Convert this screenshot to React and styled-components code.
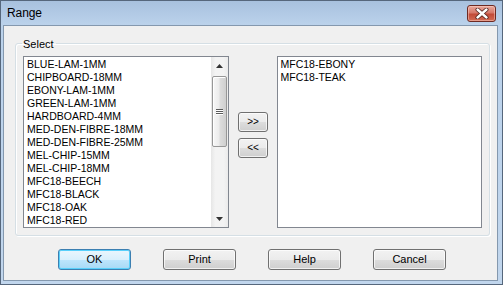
import React from 'react'
import styled, { createGlobalStyle } from 'styled-components'

const materials = [
  'BLUE-LAM-1MM',
  'CHIPBOARD-18MM',
  'EBONY-LAM-1MM',
  'GREEN-LAM-1MM',
  'HARDBOARD-4MM',
  'MED-DEN-FIBRE-18MM',
  'MED-DEN-FIBRE-25MM',
  'MEL-CHIP-15MM',
  'MEL-CHIP-18MM',
  'MFC18-BEECH',
  'MFC18-BLACK',
  'MFC18-OAK',
  'MFC18-RED',
]

const selected = ['MFC18-EBONY', 'MFC18-TEAK']

const GlobalStyle = createGlobalStyle`
  html, body {
    margin: 0;
    padding: 0;
    background: #fff;
  }
  body {
    font-family: "Liberation Sans", Arial, sans-serif;
    color: #000;
  }
`

const Window = styled.div`
  width: 503px;
  height: 285px;
  box-sizing: border-box;
  border: 1px solid #56677c;
  background: linear-gradient(#a8c1de, #bbd2eb 24px, #c1d6ed);
  display: flex;
  flex-direction: column;
  padding: 0 4px 3px 2px;
`

const TitleBar = styled.div`
  height: 24px;
  flex: none;
  display: flex;
  align-items: center;
  justify-content: space-between;
  padding: 0 2px 0 4px;
  .title {
    font-size: 12px;
    color: #000;
    letter-spacing: -0.1px;
  }
`

const CloseBtn = styled.div`
  width: 29px;
  height: 17px;
  box-sizing: border-box;
  border: 1px solid #6e2a22;
  border-radius: 3px;
  background: linear-gradient(#e9a99c, #d6786a 45%, #c24a38 55%, #d36b54);
  box-shadow: inset 0 0 0 1px rgba(255, 220, 210, 0.45);
  display: flex;
  align-items: center;
  justify-content: center;
  margin-top: 1px;
`

const Client = styled.div`
  flex: 1;
  border: 1px solid #8498ae;
  background: #f0f0f0;
  padding: 11px 7px 0 11px;
  display: flex;
  flex-direction: column;
`

const Group = styled.fieldset`
  margin: 0;
  padding: 6px 7px 7px 7px;
  border: 1px solid #d5dfe5;
  border-radius: 3px;
  box-shadow: inset 1px 1px 0 #fff, 1px 1px 0 #fff;
  display: flex;
  min-width: 0;
  legend {
    font-size: 11px;
    line-height: 13px;
    padding: 0 2px 0 1px;
    margin-left: -1px;
    position: relative;
    top: 1px;
  }
`

const ListBox = styled.div`
  width: 206px;
  height: 172px;
  box-sizing: border-box;
  border: 1px solid #828790;
  background: #fff;
  display: flex;
  overflow: hidden;
`

const Items = styled.div`
  flex: 1;
  padding: 1px 0 0 3px;
`

const Item = styled.div`
  font-size: 10.5px;
  line-height: 13px;
  height: 13px;
  white-space: nowrap;
`

const ScrollBar = styled.div`
  width: 17px;
  flex: none;
  display: flex;
  flex-direction: column;
  background: linear-gradient(to right, #e6e6e6, #f3f3f3 25%, #f3f3f3 75%, #ebebeb);
`

const Arrow = styled.div`
  height: 17px;
  flex: none;
  display: flex;
  align-items: center;
  justify-content: center;
`

const Track = styled.div`
  flex: 1;
  padding: 2px 1px 0 1px;
`

const Thumb = styled.div`
  height: 71px;
  box-sizing: border-box;
  border: 1px solid #979797;
  border-radius: 2px;
  background: linear-gradient(to right, #f7f7f7, #ececec 45%, #dcdcdc 55%, #cfcfcf);
  box-shadow: inset 1px 1px 0 #fff;
  display: flex;
  flex-direction: column;
  align-items: center;
  justify-content: center;
  gap: 1px;
  span {
    width: 7px;
    height: 1px;
    background: #5a5a5a;
    box-shadow: 0 1px 0 #fff;
  }
`

const Middle = styled.div`
  width: 47px;
  flex: none;
  display: flex;
  flex-direction: column;
  align-items: center;
  padding-top: 56px;
  gap: 6px;
  padding-left: 1px;
`

const Button = styled.button`
  width: ${p => (p.$small ? '30px' : '73px')};
  height: ${p => (p.$small ? '20px' : '21px')};
  box-sizing: border-box;
  margin: 0;
  padding: 0;
  border: 1px solid ${p => (p.$default ? '#3c7fb1' : '#707070')};
  border-radius: 3px;
  background: ${p =>
    p.$default
      ? 'linear-gradient(#eaf6fd, #d9f0fc 50%, #bee6fd 50%, #a7d9f5)'
      : 'linear-gradient(#f2f2f2, #ebebeb 50%, #dddddd 50%, #cfcfcf)'};
  box-shadow: inset 0 0 0 1px ${p => (p.$default ? '#58d0fb' : 'rgba(255,255,255,0.7)')};
  font-family: "Liberation Sans", Arial, sans-serif;
  font-size: ${p => (p.$small ? '10px' : '11px')};
  color: #000;
  line-height: 1;
  cursor: default;
`

const ButtonRow = styled.div`
  display: flex;
  gap: 32px;
  padding-left: 43px;
  margin-top: 13px;
`

const UpDown = ({ down }) => (
  <svg width="7" height="4" viewBox="0 0 7 4">
    <path d={down ? 'M0 0H7L3.5 4Z' : 'M3.5 0L7 4H0Z'} fill="#333" />
  </svg>
)

const App = () => {
  return (
    <>
      <GlobalStyle />
      <Window>
        <TitleBar>
          <span className="title">Range</span>
          <CloseBtn>
            <svg width="14" height="11" viewBox="0 0 14 11">
              <path d="M2.5 1.5L11.5 9.5M11.5 1.5L2.5 9.5" stroke="#4a1d18" strokeWidth="4" strokeLinecap="round" />
              <path d="M2.5 1.5L11.5 9.5M11.5 1.5L2.5 9.5" stroke="#fff" strokeWidth="2.4" strokeLinecap="round" />
            </svg>
          </CloseBtn>
        </TitleBar>
        <Client>
          <Group>
            <legend>Select</legend>
            <ListBox>
              <Items>
                {materials.map(m => (
                  <Item key={m}>{m}</Item>
                ))}
              </Items>
              <ScrollBar>
                <Arrow><UpDown /></Arrow>
                <Track>
                  <Thumb>
                    <span />
                    <span />
                    <span />
                  </Thumb>
                </Track>
                <Arrow><UpDown down /></Arrow>
              </ScrollBar>
            </ListBox>
            <Middle>
              <Button $small>&gt;&gt;</Button>
              <Button $small>&lt;&lt;</Button>
            </Middle>
            <ListBox>
              <Items>
                {selected.map(m => (
                  <Item key={m}>{m}</Item>
                ))}
              </Items>
            </ListBox>
          </Group>
          <ButtonRow>
            <Button $default>OK</Button>
            <Button>Print</Button>
            <Button>Help</Button>
            <Button>Cancel</Button>
          </ButtonRow>
        </Client>
      </Window>
    </>
  )
}

export default App
